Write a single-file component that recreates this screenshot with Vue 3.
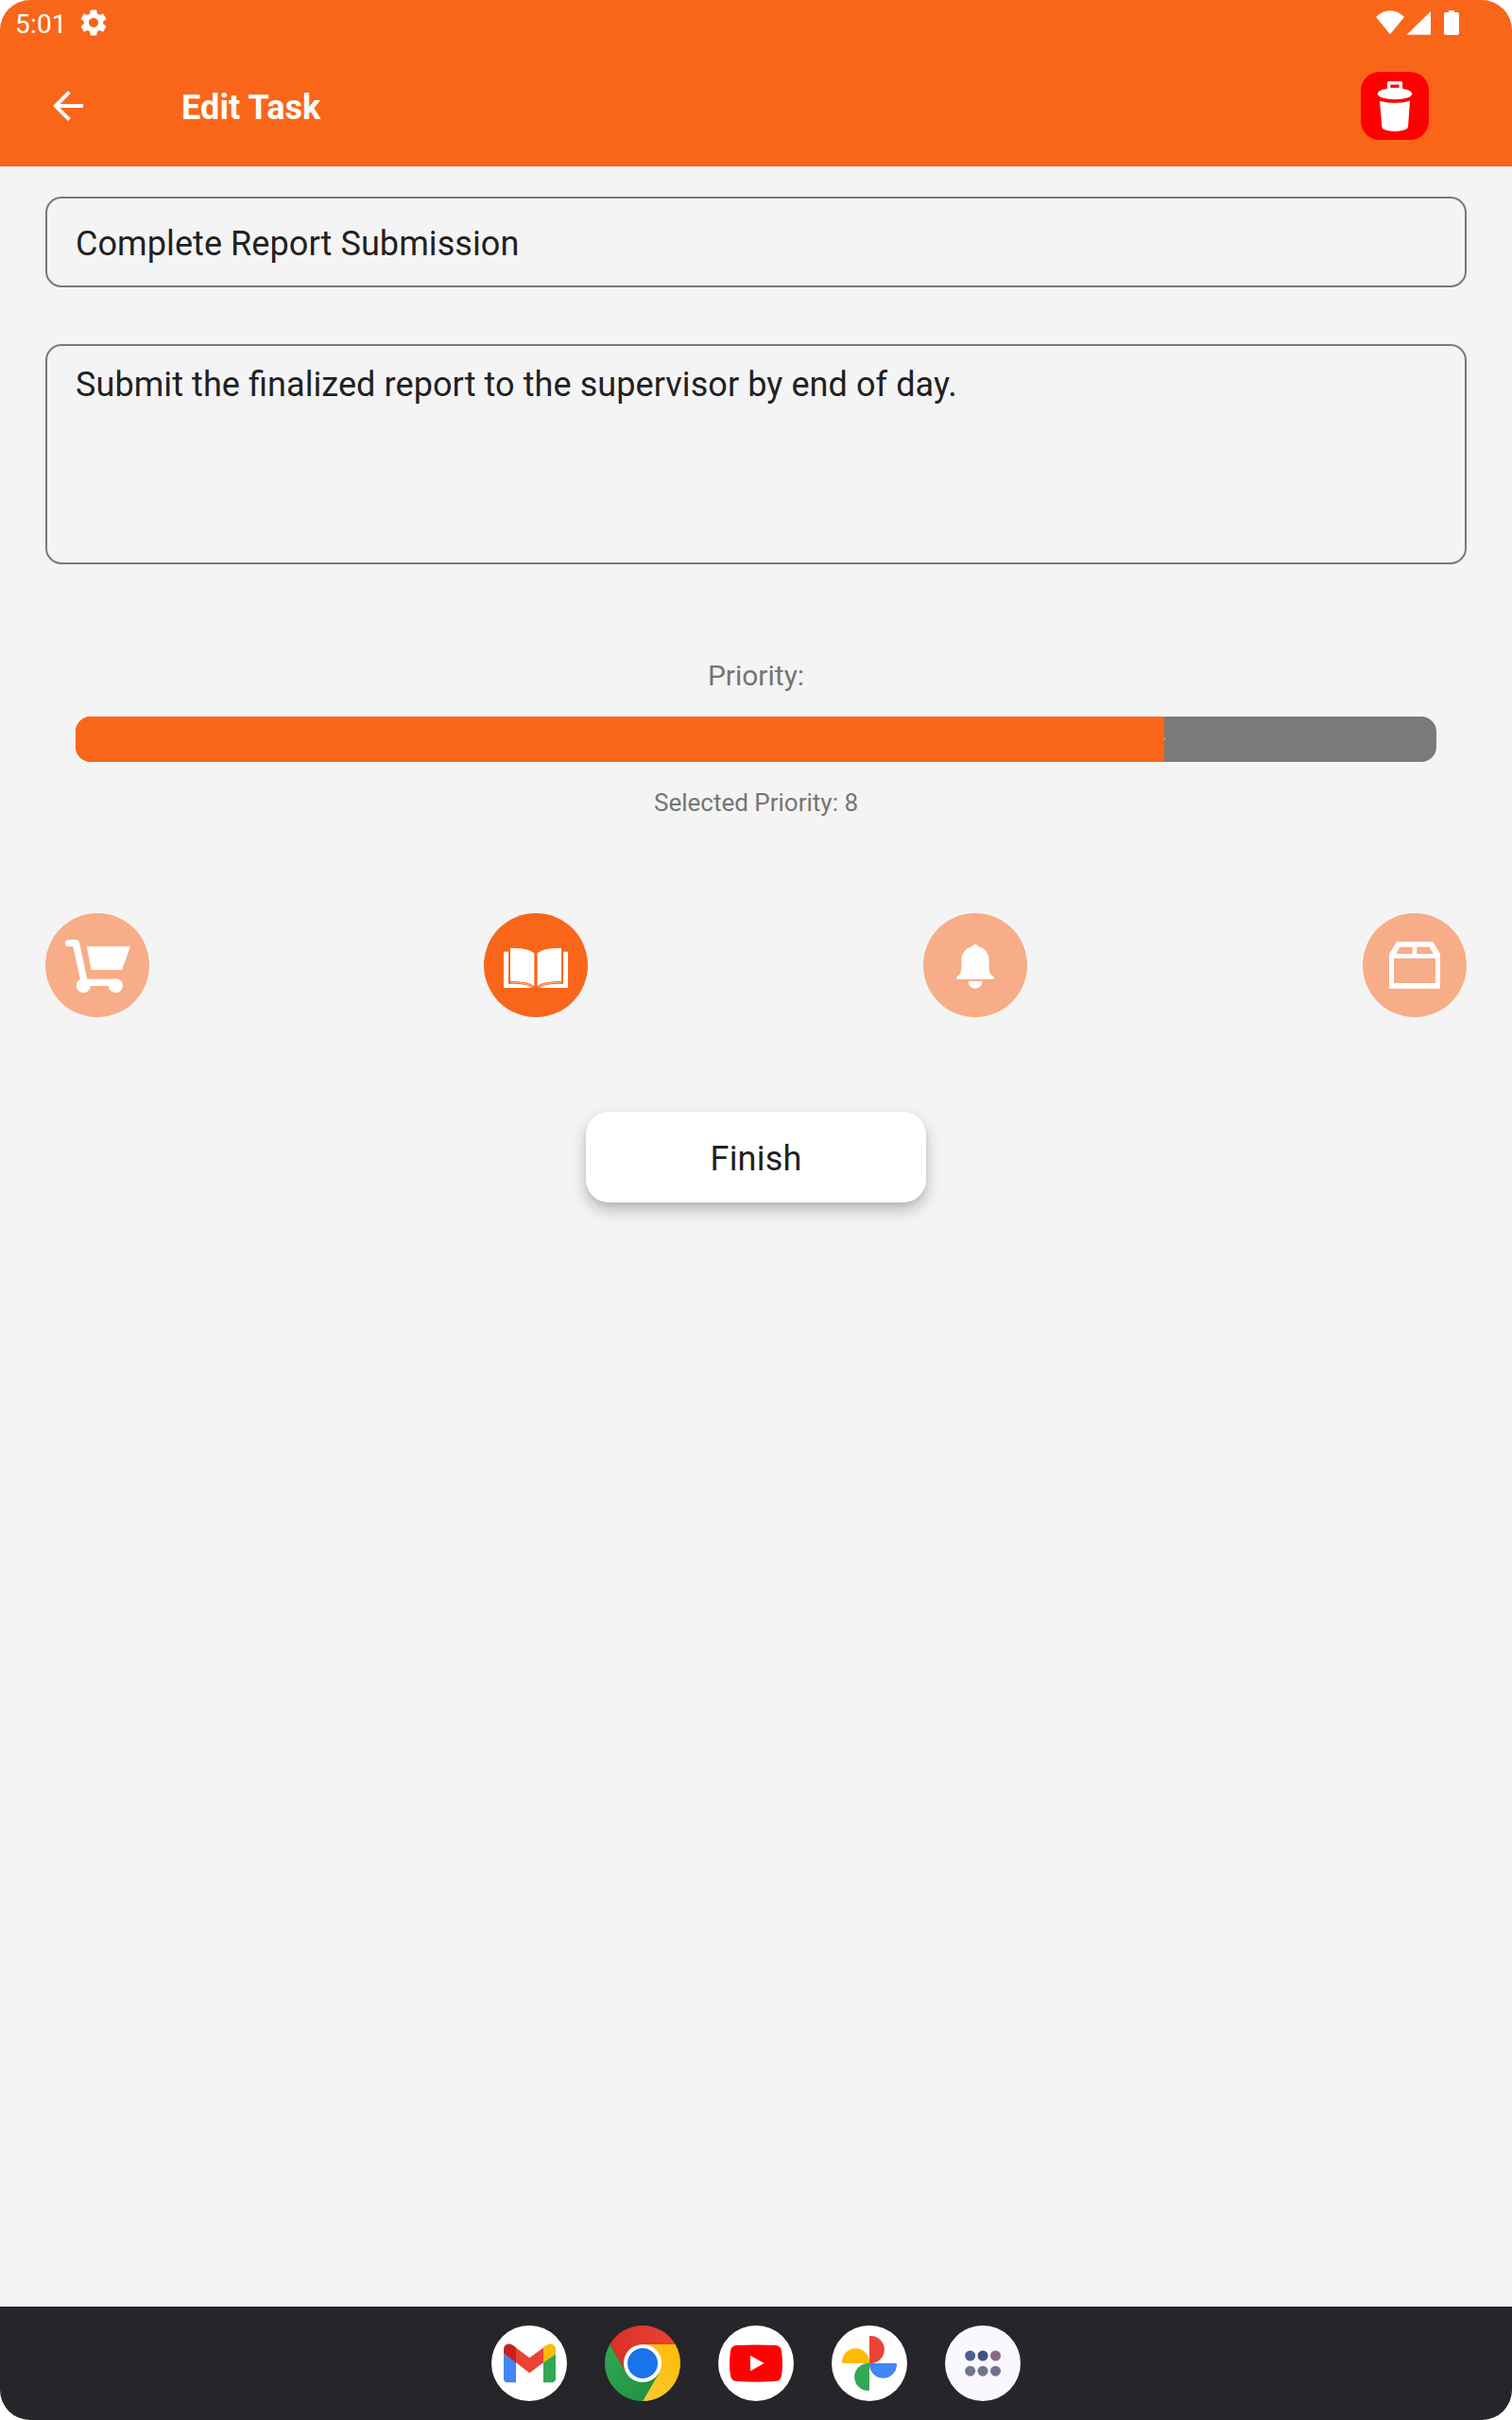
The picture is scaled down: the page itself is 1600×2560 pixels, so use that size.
<script setup>
import { ref } from 'vue'

const title = ref('Complete Report Submission')
const description = ref('Submit the finalized report to the supervisor by end of day.')
const priority = ref(8)
const category = ref('study')
const categories = ['shopping', 'study', 'reminder', 'other']
</script>

<template>
  <div class="device">
    <header class="header">
      <div class="status">
        <span class="time">5:01</span>
        <svg class="gear" viewBox="0 0 24 24">
          <path fill="#fff" d="M19.14 12.94c.04-.3.06-.61.06-.94 0-.32-.02-.64-.07-.94l2.03-1.58a.49.49 0 0 0 .12-.61l-1.92-3.32a.488.488 0 0 0-.59-.22l-2.39.96c-.5-.38-1.03-.7-1.62-.94l-.36-2.54a.484.484 0 0 0-.48-.41h-3.84c-.24 0-.43.17-.47.41l-.36 2.54c-.59.24-1.13.57-1.62.94l-2.39-.96c-.22-.08-.47 0-.59.22L2.74 8.87c-.12.21-.08.47.12.61l2.03 1.58c-.05.3-.09.63-.09.94s.02.64.07.94l-2.03 1.58a.49.49 0 0 0-.12.61l1.92 3.32c.12.22.37.29.59.22l2.39-.96c.5.38 1.03.7 1.62.94l.36 2.54c.05.24.24.41.48.41h3.84c.24 0 .44-.17.47-.41l.36-2.54c.59-.24 1.13-.56 1.62-.94l2.39.96c.22.08.47 0 .59-.22l1.92-3.32c.12-.22.07-.47-.12-.61l-2.01-1.58zM12 15.6A3.61 3.61 0 0 1 8.4 12c0-1.98 1.62-3.6 3.6-3.6s3.6 1.62 3.6 3.6-1.62 3.6-3.6 3.6z" />
        </svg>
        <svg class="signals" viewBox="168 30 264 84" fill="#fff">
          <path d="M168 54Q188 34 213 34Q238 34 258 54L213 109Z" />
          <path d="M342 36V110H266Z" />
          <path d="M399 33H417V39H427Q432 39 432 44V106Q432 111 427 111H389Q384 111 384 106V44Q384 39 389 39H399Z" />
        </svg>
      </div>
      <div class="toolbar">
        <svg class="back" viewBox="0 0 24 24">
          <path fill="#fff" d="M20 11H7.8l5.6-5.6L12 4l-8 8 8 8 1.4-1.4L7.8 13H20z" />
        </svg>
        <h1>Edit Task</h1>
        <button class="delete" aria-label="Delete">
          <svg viewBox="120 228 216 216">
            <path fill="none" stroke="#fff" stroke-width="10.5" stroke-linejoin="round" d="M209 284V263H247V284" />
            <path fill="none" stroke="#fff" stroke-width="5" d="M209 281H247" />
            <ellipse cx="228" cy="297.500" rx="54.500" ry="18.500" fill="#fff" />
            <path fill="#fff" d="M180 320Q228 333 276 320L270 403Q267 416 228 417Q189 416 187 403Z" />
          </svg>
        </button>
      </div>
    </header>

    <main class="form">
      <div class="field">{{ title }}</div>
      <div class="field area">{{ description }}</div>

      <div class="label">Priority:</div>
      <div class="track">
        <div class="fill" :style="{ width: priority * 10 + '%' }"></div>
        <i class="thumb"></i>
      </div>
      <div class="selected">Selected Priority: {{ priority }}</div>

      <div class="categories">
        <button v-for="c in categories" :key="c" class="category" :class="{ active: c === category }" :aria-label="c">
          <svg v-if="c === 'shopping'" viewBox="54 48 330 330">
            <path fill="none" stroke="#fff" stroke-width="22" stroke-linecap="round" stroke-linejoin="round" d="M128 143H151L178 268H277" />
            <circle cx="175" cy="278" r="22.500" fill="#fff" />
            <circle cx="277" cy="278" r="22.500" fill="#fff" />
            <path fill="#fff" d="M185 154H324L297 228H200Z" />
          </svg>
          <svg v-else-if="c === 'study'" viewBox="66 48 330 330" fill="#fff">
            <path d="M150 159Q207 158 226 175V279Q207 264 150 264Z" />
            <path d="M312 159Q255 158 236 175V279Q255 264 312 264Z" />
            <path d="M129 170H144V273Q194 270 219 285H129Z" />
            <path d="M333 170H318V273Q268 270 243 285H333Z" />
            <path opacity=".55" d="M150 267Q202 265 225 281L222 283Q198 268 150 269ZM312 267Q260 265 237 281L240 283Q264 268 312 269Z" />
          </svg>
          <svg v-else-if="c === 'reminder'" viewBox="51 48 330 330" fill="#fff">
            <path d="M216 147Q222 147 227 154C248 160 260 176 260 200V222Q260 239 269 246L275 249V258H157V249L163 246Q172 239 172 222V200C172 176 184 160 205 154Q210 147 216 147Z" />
            <path d="M194 264H238C238 278 228 287 216 287S194 278 194 264Z" />
          </svg>
          <svg v-else viewBox="51 48 330 330">
            <path fill="#fff" fill-rule="evenodd" d="M159 139H274L297 178V287H135V178ZM150 191V270H282V191ZM169 155L157 177H209V155ZM223 155V177H275L263 155Z" />
          </svg>
        </button>
      </div>

      <button class="finish">Finish</button>
    </main>

    <nav class="dock">
      <svg viewBox="60 90 240 240">
        <circle cx="180" cy="210" r="120" fill="#fff" />
        <path fill="#4285f4" d="M99 181L138 206V271H111Q99 271 99 259Z" />
        <path fill="#34a853" d="M264 181L225 206V271H252Q264 271 264 259Z" />
        <path fill="#ea4335" d="M137 160L181 193L226 160V207L181 241L137 207Z" />
        <path fill="#c5221f" d="M99 167C99 149 116 143 129 153L138 160V208L99 180Z" />
        <path fill="#fbbc04" d="M264 167C264 149 247 143 234 153L225 160V208L264 180Z" />
      </svg>
      <svg viewBox="0 0 240 240">
        <defs>
          <linearGradient id="red" x1="0" x2="1"><stop offset="0" stop-color="#d93025" /><stop offset="1" stop-color="#ea4335" /></linearGradient>
          <linearGradient id="yellow" x1="1" y1="0" x2="0" y2="1"><stop offset="0" stop-color="#fbbc04" /><stop offset="1" stop-color="#fcc934" /></linearGradient>
          <linearGradient id="green" x1="0" y1="0" x2="1" y2="1"><stop offset="0" stop-color="#34a853" /><stop offset="1" stop-color="#1e8e3e" /></linearGradient>
        </defs>
        <path fill="url(#red)" d="M16.100 60A120 120 0 0 1 223.900 60H120L68 150Z" />
        <path fill="url(#yellow)" d="M223.900 60A120 120 0 0 1 120 240L172 150L120 60Z" />
        <path fill="url(#green)" d="M16.100 60A120 120 0 0 0 120 240L172 150H68Z" />
        <circle cx="120" cy="120" r="60" fill="#fff" />
        <circle cx="120" cy="120" r="48" fill="#1a73e8" />
      </svg>
      <svg viewBox="780 90 240 240">
        <circle cx="900" cy="210" r="120" fill="#fff" />
        <path fill="#f00" d="M838 153Q900 150 962 153Q979 154 981 171Q987 210 981 249Q979 266 962 267Q900 271 838 267Q821 266 819 249Q813 210 819 171Q821 154 838 153Z" />
        <path fill="#fff" d="M882 185L926 210L882 235Z" />
      </svg>
      <svg viewBox="150 90 240 240">
        <circle cx="270" cy="210" r="120" fill="#fff" />
        <path fill="#ea4335" d="M270 210V127Q270 123 274 123A43.500 43.500 0 0 1 274 210Z" />
        <path fill="#4285f4" d="M270 210H353Q357 210 357 214A43.500 43.500 0 0 1 270 214Z" />
        <path fill="#34a853" d="M270 210V293Q270 297 266 297A43.500 43.500 0 0 1 266 210Z" />
        <path fill="#fbbc04" d="M270 210H187Q183 210 183 206A43.500 43.500 0 0 1 270 206Z" />
      </svg>
      <svg viewBox="510 90 240 240">
        <circle cx="630" cy="210" r="120" fill="#faf8fd" />
        <circle cx="590" cy="186" r="16.500" fill="#4b5f94" />
        <circle cx="630" cy="186" r="16.500" fill="#3f5286" />
        <circle cx="670.500" cy="186" r="16.500" fill="#8c6888" />
        <circle cx="590" cy="234.500" r="16.500" fill="#707589" />
        <circle cx="630" cy="234.500" r="16.500" fill="#707589" />
        <circle cx="670.500" cy="234.500" r="16.500" fill="#707589" />
      </svg>
    </nav>
  </div>
</template>

<style>
body {
  margin: 0;
  background: #fff;
}
</style>

<style scoped>
.device {
  display: flex;
  flex-direction: column;
  width: 1600px;
  height: 2560px;
  border-radius: 32px;
  overflow: hidden;
  background: #f4f4f4;
  color: #212121;
  font-family: Roboto, sans-serif;
}
.device svg {
  display: block;
}
button {
  border: 0;
  padding: 0;
  font-family: inherit;
}
.header {
  height: 176px;
  background: #f9661a;
  color: #fff;
}
.status {
  display: flex;
  align-items: center;
  height: 48px;
  padding: 0 56px 0 16px;
  box-sizing: border-box;
}
.time {
  width: 66px;
  padding-top: 3px;
  font-size: 28px;
  line-height: 32px;
  letter-spacing: 0.2px;
}
.gear {
  width: 34px;
  height: 34px;
}
.signals {
  width: 88px;
  height: 28px;
  margin-left: auto;
}
.toolbar {
  display: flex;
  align-items: center;
  height: 128px;
  padding: 0 88px 0 48px;
}
.back {
  width: 48px;
  height: 48px;
}
h1 {
  flex: 1;
  margin: 0 0 0 96px;
  padding-top: 4px;
  font-size: 36px;
  line-height: 42px;
  font-weight: 700;
  letter-spacing: 0.1px;
}
.delete {
  width: 72px;
  height: 72px;
  border-radius: 20px;
  background: #f00;
}
.form {
  flex: 1;
  display: flex;
  flex-direction: column;
  align-items: center;
  padding: 32px 48px 0;
}
.field {
  box-sizing: border-box;
  width: 100%;
  height: 96px;
  padding: 27px 30px 0;
  border: 2px solid #7a7a7a;
  border-radius: 17px;
  font-size: 36px;
  line-height: 42px;
  letter-spacing: 0.08px;
  font-feature-settings: "liga" 1;
}
.area {
  height: 233px;
  margin-top: 60px;
  padding-top: 20px;
}
.label {
  margin-top: 100px;
  font-size: 30px;
  line-height: 36px;
  color: #757575;
}
.track {
  display: flex;
  align-items: center;
  width: 1440px;
  height: 48px;
  margin-top: 25px;
  border-radius: 16px;
  overflow: hidden;
  background: #7a7a7a;
}
.fill {
  height: 100%;
  background: #f9661a;
}
.thumb {
  width: 1px;
  height: 1px;
  margin-bottom: 1px;
  background: #fff;
}
.selected {
  margin-top: 28px;
  font-size: 26px;
  line-height: 30px;
  color: #757575;
}
.categories {
  display: grid;
  grid-template-columns: 464px 465px 465px 110px;
  margin-top: 102px;
}
.category {
  width: 110px;
  height: 110px;
  border-radius: 50%;
  background: #f7ad87;
}
.category.active {
  background: #f9661a;
}
.finish {
  width: 360px;
  height: 96px;
  margin-top: 100px;
  padding-top: 4px;
  border-radius: 24px;
  background: #fff;
  box-shadow: 0 8px 16px rgba(0, 0, 0, 0.24), 0 2px 5px rgba(0, 0, 0, 0.06);
  color: #212121;
  font-size: 36px;
  letter-spacing: 0.2px;
}
.dock {
  display: flex;
  justify-content: center;
  align-items: center;
  gap: 40px;
  height: 120px;
  background: #25252a;
}
.dock svg {
  width: 80px;
  height: 80px;
}
</style>
